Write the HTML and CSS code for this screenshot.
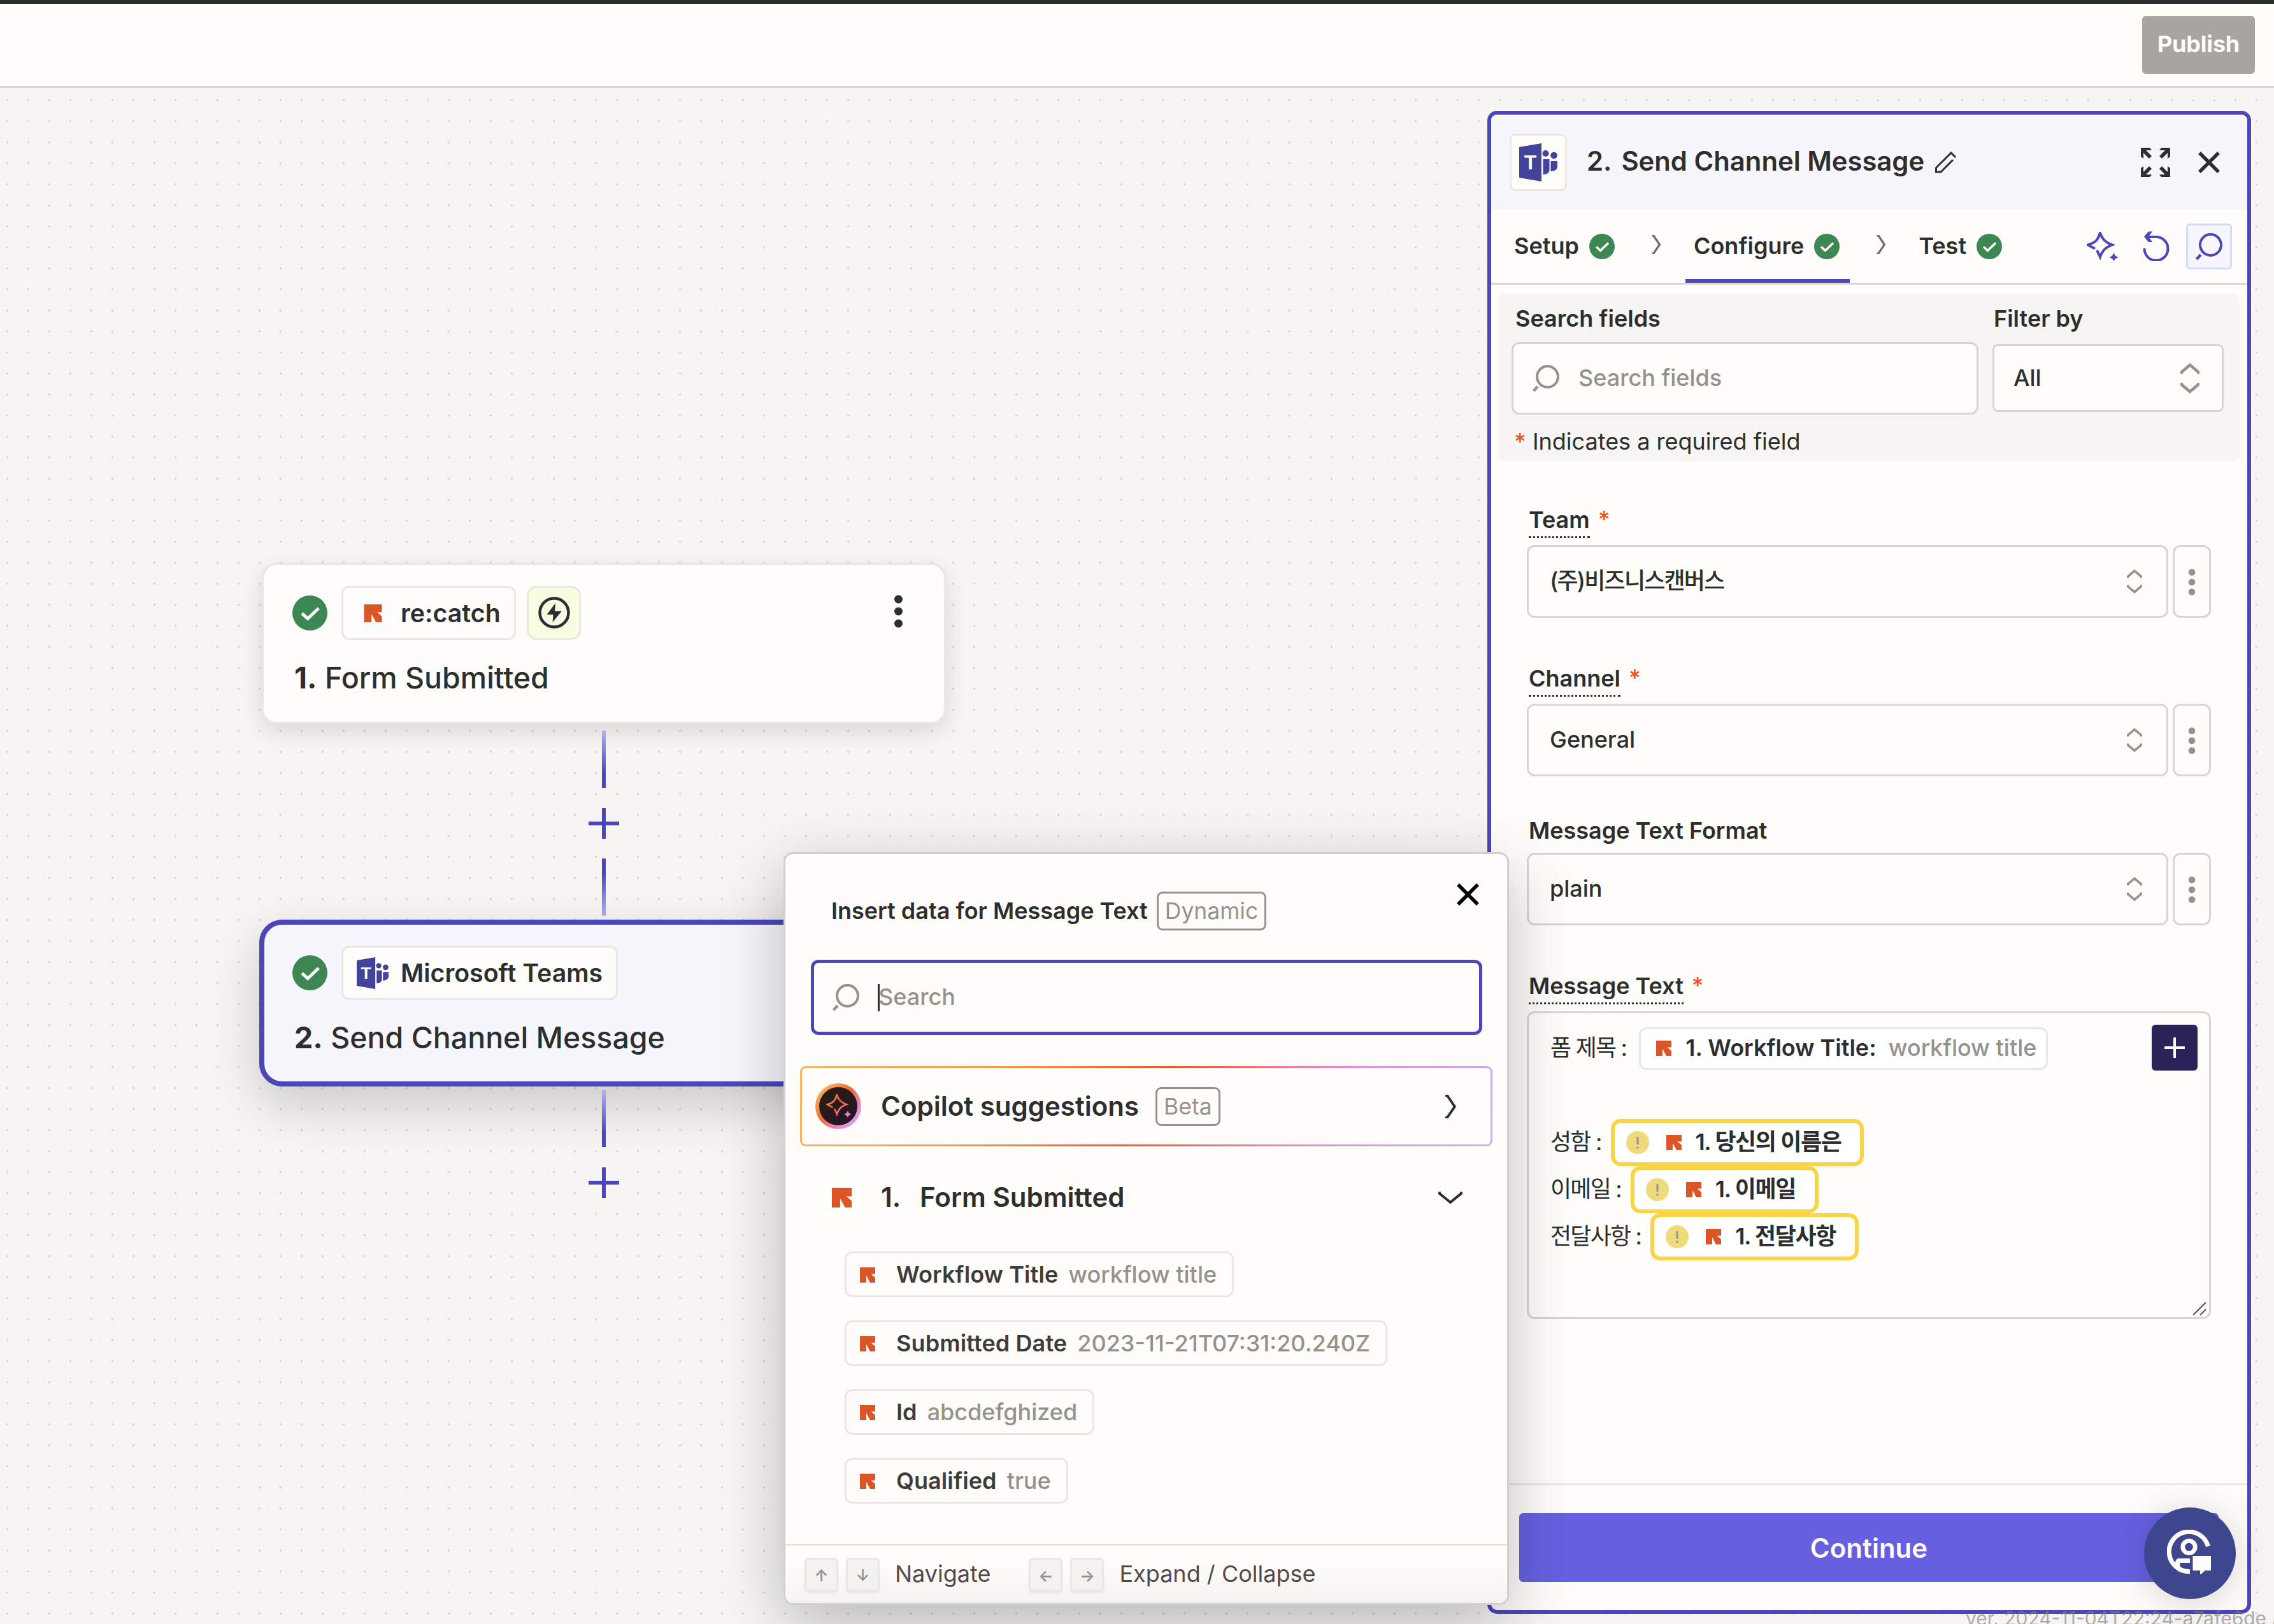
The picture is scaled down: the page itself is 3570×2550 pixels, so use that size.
FILE: index.html
```html
<!DOCTYPE html>
<html lang="en">
<head>
  <meta charset="UTF-8">
  <title>Zap editor - Send Channel Message</title>
  <meta name="viewport" content="width=device-width, initial-scale=1.0">
  <link rel="stylesheet" href="styles.css">
</head>
<body>
  <!-- Shared icons -->
  <svg class="sprite" aria-hidden="true">
    <symbol id="i-check" viewBox="0 0 40 40">
      <circle cx="20" cy="20" r="20" fill="#3d8755"/>
      <path d="M11 20.5L17.5 26.5L30 14.5" fill="none" stroke="#fffdf9" stroke-width="3.6"/>
    </symbol>
    <symbol id="i-recatch" viewBox="0 0 30 30">
      <path d="M0 0H30V13H22L30 20V30H20L12.5 16V30H0Z" fill="#dc5527"/>
    </symbol>
    <symbol id="i-teams" viewBox="0 0 60 60">
      <path d="M0 6L35 0V60L0 54Z" fill="#44439b"/>
      <text x="17.5" y="41" text-anchor="middle" class="teams-letter">T</text>
      <circle cx="41.5" cy="16" r="5" fill="#44439b"/>
      <circle cx="54.5" cy="19" r="5.3" fill="#44439b"/>
      <path d="M37.5 25H47.5V42Q47 49 37.5 49Z" fill="#44439b"/>
      <path d="M49.5 28H60V37Q59 44 49.5 44Z" fill="#44439b"/>
    </symbol>
    <symbol id="i-search" viewBox="0 0 42 43">
      <circle cx="23.5" cy="18.5" r="16.5" fill="none" stroke="currentColor" stroke-width="4"/>
      <path d="M8 34L1.5 41" fill="none" stroke="currentColor" stroke-width="4.5"/>
    </symbol>
    <symbol id="i-updown" viewBox="0 0 30 48">
      <path d="M1.5 17V14.5L15 3L28.5 14.5V17M1.5 31V33.5L15 45L28.5 33.5V31" fill="none" stroke="currentColor" stroke-width="4.5"/>
    </symbol>
    <symbol id="i-chevron" viewBox="0 0 16 30">
      <path d="M1.5 1L4 1L13.5 15L4 29H1.5" fill="none" stroke="currentColor" stroke-width="3.2"/>
    </symbol>
    <symbol id="i-close" viewBox="0 0 34 34">
      <path d="M2 2L32 32M32 2L2 32" fill="none" stroke="currentColor" stroke-width="5.5"/>
    </symbol>
    <symbol id="i-plus" viewBox="0 0 48 48">
      <path d="M24 0V48M0 24H48" fill="none" stroke="currentColor" stroke-width="6"/>
    </symbol>
    <symbol id="i-kebab" viewBox="0 0 12 44">
      <circle cx="6" cy="6.5" r="5.3" fill="currentColor"/>
      <circle cx="6" cy="22" r="5.3" fill="currentColor"/>
      <circle cx="6" cy="37.5" r="5.3" fill="currentColor"/>
    </symbol>
    <symbol id="i-sparkle" viewBox="0 0 50 48">
      <path d="M13 26.5L2 20.5Q13 17 16 12.5Q19 8 21 2Q23 8 27 12.5Q31 17 40 20.5Q31 24 27 28.5Q23 33 21 39.5Q18 33 16 29" fill="none" stroke="currentColor" stroke-width="4"/>
      <path d="M42.5 32Q43.5 38.5 50 40Q43.5 41.5 42.5 47Q41.5 41.5 35 40Q41.5 38.5 42.5 32Z" fill="currentColor"/>
    </symbol>
    <symbol id="i-warn" viewBox="0 0 36 36">
      <circle cx="18" cy="18" r="18" fill="#efdb7b"/>
      <path d="M18 9V21M18 24.5V27.5" stroke="#95928e" stroke-width="3"/>
    </symbol>
  </svg>

  <header class="topbar">
    <button class="publish">Publish</button>
  </header>

  <main class="canvas">
    <!-- Step 1 -->
    <section class="node node-trigger">
      <div class="node-head">
        <svg class="node-check"><use href="#i-check"/></svg>
        <div class="app-chip">
          <span class="app-logo"><svg><use href="#i-recatch"/></svg></span>
          <span>re:catch</span>
        </div>
        <div class="bolt-chip">
          <svg viewBox="0 0 50 50">
            <circle cx="25" cy="25" r="22.5" fill="none" stroke="#2d2e2e" stroke-width="4.5"/>
            <path d="M27 10L13.5 28H23.5L22.5 40L37 22.5H26Z" fill="#2d2e2e"/>
          </svg>
        </div>
        <svg class="node-menu"><use href="#i-kebab"/></svg>
      </div>
      <h2 class="node-title"><b>1.</b> Form Submitted</h2>
    </section>

    <div class="link link-1"></div>
    <div class="add add-1"><svg><use href="#i-plus"/></svg></div>
    <div class="link link-2 up"></div>

    <!-- Step 2 -->
    <section class="node node-action">
      <div class="node-head">
        <svg class="node-check"><use href="#i-check"/></svg>
        <div class="app-chip">
          <svg class="teams"><use href="#i-teams"/></svg>
          <span>Microsoft Teams</span>
        </div>
      </div>
      <h2 class="node-title"><b>2.</b> Send Channel Message</h2>
    </section>

    <div class="link link-3"></div>
    <div class="add add-2"><svg><use href="#i-plus"/></svg></div>
  </main>

  <!-- Step editor -->
  <aside class="panel">
    <div class="panel-head">
      <div class="panel-logo"><svg><use href="#i-teams"/></svg></div>
      <h1 class="panel-title"><span>2.</span><span>Send Channel Message</span></h1>
      <svg class="pencil" viewBox="0 0 34 34">
        <path d="M32 9L25 2L1.5 25.5V32H9L28 13" fill="none" stroke="#2d2e2e" stroke-width="3"/>
      </svg>
      <svg class="expand" viewBox="0 0 46 46">
        <g fill="#2d2e2e">
          <path d="M0 0H14L17 4H8L17 13L13 17L4 8V17L0 14Z"/>
          <path d="M46 0H32L29 4H38L29 13L33 17L42 8V17L46 14Z"/>
          <path d="M0 46H14L17 42H8L17 33L13 29L4 38V29L0 32Z"/>
          <path d="M46 46H32L29 42H38L29 33L33 29L42 38V29L46 32Z"/>
        </g>
      </svg>
      <svg class="close"><use href="#i-close"/></svg>
    </div>

    <nav class="tabs">
      <div class="tab">Setup <svg class="tab-check"><use href="#i-check"/></svg></div>
      <svg class="tab-sep"><use href="#i-chevron"/></svg>
      <div class="tab active">Configure <svg class="tab-check"><use href="#i-check"/></svg></div>
      <svg class="tab-sep"><use href="#i-chevron"/></svg>
      <div class="tab">Test <svg class="tab-check"><use href="#i-check"/></svg></div>
      <div class="tools">
        <svg class="tool-sparkle"><use href="#i-sparkle"/></svg>
        <svg class="tool-undo" viewBox="0 0 42 48">
          <path d="M5 10H21A18.5 18.5 0 1 1 2.5 28" fill="none" stroke="currentColor" stroke-width="4"/>
          <path d="M2 9.5L9 1.5H15L9 9.5L15 18H9Z" fill="currentColor"/>
        </svg>
        <div class="tool-search"><svg><use href="#i-search"/></svg></div>
      </div>
    </nav>

    <div class="filters">
      <div class="filter-row">
        <div class="filter-search">
          <label class="label">Search fields</label>
          <div class="input"><svg><use href="#i-search"/></svg><span>Search fields</span></div>
        </div>
        <div class="filter-by">
          <label class="label">Filter by</label>
          <div class="select">All<svg><use href="#i-updown"/></svg></div>
        </div>
      </div>
      <p class="hint"><span class="star">*</span> Indicates a required field</p>
    </div>

    <div class="fields">
      <div class="field">
        <div class="field-label"><span class="label dotted">Team</span><span class="star">*</span></div>
        <div class="combo">
          <div class="combo-box ko">(주)비즈니스캔버스<svg><use href="#i-updown"/></svg></div>
          <div class="combo-menu"><svg><use href="#i-kebab"/></svg></div>
        </div>
      </div>
      <div class="field field-channel">
        <div class="field-label"><span class="label dotted">Channel</span><span class="star">*</span></div>
        <div class="combo">
          <div class="combo-box">General<svg><use href="#i-updown"/></svg></div>
          <div class="combo-menu"><svg><use href="#i-kebab"/></svg></div>
        </div>
      </div>
      <div class="field field-format">
        <div class="field-label"><span class="label">Message Text Format</span></div>
        <div class="combo">
          <div class="combo-box">plain<svg><use href="#i-updown"/></svg></div>
          <div class="combo-menu"><svg><use href="#i-kebab"/></svg></div>
        </div>
      </div>
      <div class="field">
        <div class="field-label"><span class="label dotted">Message Text</span><span class="star">*</span></div>
        <div class="editor">
          <div class="line">
            <span class="line-text first ko">폼 제목 :</span>
            <span class="pill"><svg class="rc"><use href="#i-recatch"/></svg><b>1. Workflow Title:</b><i>workflow title</i></span>
          </div>
          <div class="line"></div>
          <div class="line">
            <span class="line-text ko">성함 :</span>
            <span class="pill warn"><svg class="wi"><use href="#i-warn"/></svg><svg class="rc"><use href="#i-recatch"/></svg><b>1. 당신의 이름은</b></span>
          </div>
          <div class="line">
            <span class="line-text ko">이메일 :</span>
            <span class="pill warn"><svg class="wi"><use href="#i-warn"/></svg><svg class="rc"><use href="#i-recatch"/></svg><b>1. 이메일</b></span>
          </div>
          <div class="line">
            <span class="line-text ko">전달사항 :</span>
            <span class="pill warn"><svg class="wi"><use href="#i-warn"/></svg><svg class="rc"><use href="#i-recatch"/></svg><b>1. 전달사항</b></span>
          </div>
          <button class="insert"><svg><use href="#i-plus"/></svg></button>
          <svg class="grip" viewBox="0 0 22 22"><path d="M1 21L21 1M12 21L21 12" stroke="#55524f" stroke-width="2"/></svg>
        </div>
      </div>
    </div>

    <div class="panel-foot">
      <button class="continue">Continue</button>
    </div>
  </aside>

  <!-- Insert data popup -->
  <div class="popup">
    <div class="popup-head">
      <span class="popup-title">Insert data for Message Text</span>
      <span class="badge">Dynamic</span>
      <svg class="popup-close"><use href="#i-close"/></svg>
    </div>
    <div class="popup-search"><svg><use href="#i-search"/></svg><span class="caret"></span><span>Search</span></div>
    <div class="copilot">
      <div class="orb">
        <svg viewBox="0 0 50 48">
          <defs>
            <linearGradient id="spark" x1="0" y1="0" x2="1" y2="1">
              <stop offset="0" stop-color="#f5b45f"/>
              <stop offset=".45" stop-color="#ef5a2a"/>
              <stop offset="1" stop-color="#ee82c4"/>
            </linearGradient>
          </defs>
          <path d="M13 26.5L2 20.5Q13 17 16 12.5Q19 8 21 2Q23 8 27 12.5Q31 17 40 20.5Q31 24 27 28.5Q23 33 21 39.5Q18 33 16 29" fill="none" stroke="url(#spark)" stroke-width="3.5"/>
          <path d="M42.5 32Q43.5 38.5 50 40Q43.5 41.5 42.5 47Q41.5 41.5 35 40Q41.5 38.5 42.5 32Z" fill="#ee7fc0"/>
        </svg>
      </div>
      <span class="copilot-text">Copilot suggestions</span>
      <span class="badge">Beta</span>
      <svg class="row-arrow"><use href="#i-chevron"/></svg>
    </div>
    <div class="group">
      <span class="group-logo"><svg><use href="#i-recatch"/></svg></span>
      <span class="group-num">1.</span>
      <span class="group-name">Form Submitted</span>
      <svg class="group-arrow" viewBox="0 0 38 22"><path d="M2 1.5V4L19 18L36 4V1.5" fill="none" stroke="#2d2e2e" stroke-width="4"/></svg>
    </div>
    <div class="tokens">
      <div class="token"><span><svg class="rc"><use href="#i-recatch"/></svg></span><b>Workflow Title</b><i>workflow title</i></div>
      <div class="token"><span><svg class="rc"><use href="#i-recatch"/></svg></span><b>Submitted Date</b><i>2023-11-21T07:31:20.240Z</i></div>
      <div class="token"><span><svg class="rc"><use href="#i-recatch"/></svg></span><b>Id</b><i>abcdefghized</i></div>
      <div class="token"><span><svg class="rc"><use href="#i-recatch"/></svg></span><b>Qualified</b><i>true</i></div>
    </div>
    <div class="popup-foot">
      <kbd>↑</kbd><kbd>↓</kbd><span class="nav">Navigate</span>
      <kbd>←</kbd><kbd>→</kbd><span>Expand / Collapse</span>
    </div>
  </div>

  <div class="version">ver. 2024-11-04T22:24-a7afe6de /</div>

  <div class="chat">
    <svg viewBox="0 0 70 70">
      <path d="M64.5 26A31.2 31.2 0 1 0 36 65.500" fill="none" stroke="#fffdf9" stroke-width="7.2"/>
      <circle cx="34.5" cy="27" r="9.7" fill="none" stroke="#fffdf9" stroke-width="6.8"/>
      <path d="M17 62V55Q15.5 48.5 19 48.5H36" fill="none" stroke="#fffdf9" stroke-width="7"/>
      <path d="M40.5 41H69V64H59.5L54 69.5H52V64H40.5Z" fill="#fffdf9"/>
    </svg>
  </div>
</body>
</html>
```
FILE: styles.css
```css
* {
  box-sizing: border-box;
}
body {
  margin: 0;
  width: 3570px;
  height: 2550px;
  position: relative;
  overflow: hidden;
  font-family: Inter, "Noto Sans CJK KR", sans-serif;
  font-size: 36px;
  line-height: 1.2;
  color: #2d2e2e;
  background-color: #f6f5f4;
}
svg {
  display: block;
  flex: none;
}
h1, h2, p {
  margin: 0;
}
i {
  font-style: normal;
}
button {
  font-family: inherit;
  border: none;
  padding: 0;
}
.sprite {
  display: none;
}
.teams-letter {
  font-family: "Liberation Sans", sans-serif;
  font-weight: 700;
  font-size: 32px;
  fill: #fffdf9;
}
.ko {
  letter-spacing: -1.8px;
}

/* Top bar */
.topbar {
  height: 138px;
  border-top: 6px solid #2d2e2e;
  border-bottom: 3px solid #d7d5d2;
  background: #fffdf9;
  display: flex;
  justify-content: flex-end;
  padding: 19px 30px 0 0;
}
.publish {
  width: 177px;
  height: 91px;
  padding-bottom: 3px;
  border-radius: 6px;
  background: #a8a5a0;
  color: #fffdf9;
  font-size: 36px;
  font-weight: 700;
  letter-spacing: -0.2px;
}

/* Canvas */
.canvas {
  height: 2412px;
  background-image: radial-gradient(circle at 11.5px 25.5px, #d9d7d5 1.3px, transparent 2.3px);
  background-size: 33px 33px;
  background-position: 0 -6px;
}
.node {
  position: absolute;
  background: #fffdf9;
}
.node-trigger {
  left: 411px;
  top: 884px;
  width: 1074px;
  height: 253px;
  padding: 33px 42px 0 45px;
  border: 3px solid #e8e7e4;
  border-radius: 24px;
  box-shadow: 0 12px 36px rgba(0, 0, 0, 0.12);
}
.node-action {
  left: 407px;
  top: 1444px;
  width: 1084px;
  height: 262px;
  padding: 33px 44px 0 44px;
  border: 8px solid #4c46b9;
  border-radius: 36px;
  background: #f7f6fd;
  box-shadow: 0 30px 80px rgba(0, 0, 0, 0.18);
}
.node-head {
  display: flex;
  align-items: center;
  height: 85px;
}
.node-check {
  width: 55px;
  height: 55px;
  margin-right: 22px;
}
.app-chip {
  height: 85px;
  display: flex;
  align-items: center;
  gap: 19px;
  padding: 0 21px;
  border: 3px solid #e8e7e4;
  border-radius: 12px;
  background: #fffdf9;
  font-size: 39.300px;
  font-weight: 600;
}
.app-logo {
  width: 50px;
  height: 50px;
  padding: 11px;
  background: #fff;
}
.app-logo svg {
  width: 29px;
  height: 28px;
}
.teams {
  width: 50px;
  height: 50px;
}
.bolt-chip {
  width: 85px;
  height: 85px;
  margin-left: 17px;
  padding: 14px 15px;
  border: 3px solid #e8e7e4;
  border-radius: 15px;
  background: #f7fde1;
}
.bolt-chip svg {
  width: 50px;
  height: 50px;
}
.node-menu {
  width: 15px;
  height: 54px;
  margin-left: auto;
  margin-right: 22px;
  margin-bottom: 6px;
}
.node-title {
  margin: 31px 0 0 3px;
  font-size: 46.500px;
  line-height: 56px;
  font-weight: 500;
}
.node-title b {
  font-weight: 700;
}
.link {
  position: absolute;
  left: 945px;
  width: 6px;
  height: 90px;
  background: linear-gradient(#b5b0ee, #4c46b9 75%);
}
.link.up {
  background: linear-gradient(to top, #b5b0ee, #4c46b9 75%);
}
.link-1 { top: 1147px; }
.link-2 { top: 1348px; }
.link-3 { top: 1711px; }
.add {
  position: absolute;
  left: 903px;
  width: 90px;
  height: 90px;
  padding: 21px;
  border-radius: 50%;
  background: #f6f5f4;
  color: #4c46b9;
}
.add svg {
  width: 48px;
  height: 48px;
}
.add-1 { top: 1248px; }
.add-2 { top: 1812px; }

/* Step editor */
.panel {
  position: absolute;
  left: 2335px;
  top: 174px;
  width: 1199px;
  height: 2360px;
  display: flex;
  flex-direction: column;
  border: 6px solid #4c46b9;
  border-radius: 15px;
  background: #fffdf9;
  overflow: hidden;
}
.panel-head {
  height: 150px;
  display: flex;
  align-items: center;
  padding: 0 43px 0 29px;
  background: #f7f6fd;
}
.panel-logo {
  width: 90px;
  height: 90px;
  padding: 12px;
  border: 3px solid #e8e7e4;
  border-radius: 9px;
  background: #fffdf9;
}
.panel-logo svg {
  width: 60px;
  height: 60px;
}
.panel-title {
  display: flex;
  gap: 15px;
  margin-left: 31px;
  padding-bottom: 4px;
  font-size: 41.800px;
  font-weight: 600;
}
.pencil {
  width: 34px;
  height: 34px;
  margin-left: 17px;
}
.expand {
  width: 46px;
  height: 46px;
  margin-left: auto;
}
.close {
  width: 34px;
  height: 34px;
  margin-left: 44px;
}
.tabs {
  height: 117px;
  display: flex;
  padding-left: 23px;
  border-bottom: 3px solid #d7d5d2;
}
.tab {
  display: flex;
  align-items: center;
  gap: 16px;
  height: 114px;
  padding: 5px 16px 0 13px;
  border-bottom: 6px solid transparent;
  font-weight: 600;
}
.tab.active {
  border-color: #4c46b9;
}
.tab-check {
  width: 40px;
  height: 40px;
}
.tab-sep {
  width: 16px;
  height: 30px;
  margin: 39px 38px 0 41px;
  color: #6b6a68;
}
.tools {
  display: flex;
  margin-left: auto;
  padding: 21px 24px 0 0;
  color: #4c46b9;
}
.tool-sparkle {
  width: 50px;
  height: 48px;
  margin: 13px 38px 0 0;
}
.tool-undo {
  width: 42px;
  height: 48px;
  margin: 11px 26px 0 0;
}
.tool-search {
  width: 72px;
  height: 72px;
  padding: 12px;
  border: 3px solid #d4d8fa;
  border-radius: 6px;
  background: #f7f6fd;
}
.tool-search svg {
  width: 42px;
  height: 43px;
}
.filters {
  height: 262px;
  margin: 15px 12px 0 11px;
  padding: 16px 25px 0 21px;
  border-radius: 9px;
  background: #f6f5f4;
}
.filter-row {
  display: flex;
  gap: 22px;
  height: 173px;
}
.label {
  display: block;
  font-size: 36px;
  line-height: 44px;
  font-weight: 600;
}
.filter-search .label {
  padding-left: 6px;
}
.filter-by .label {
  padding-left: 2px;
}
.filter-search {
  width: 733px;
}
.input {
  height: 114px;
  margin-top: 15px;
  display: flex;
  align-items: center;
  gap: 30px;
  padding-left: 30px;
  border: 3px solid #d7d5d2;
  border-radius: 12px;
  background: #fffdf9;
  color: #95928e;
  font-weight: 500;
}
.input svg {
  width: 42px;
  height: 43px;
}
.filter-by {
  width: 363px;
}
.select {
  height: 107px;
  margin-top: 18px;
  display: flex;
  align-items: center;
  justify-content: space-between;
  padding: 0 35px 0 30px;
  border: 3px solid #d7d5d2;
  border-radius: 9px;
  background: #fffdf9;
  font-weight: 500;
}
.select svg {
  width: 30px;
  height: 48px;
  color: #95928e;
}
.star {
  color: #f0521f;
  font-weight: 500;
}
.hint {
  padding-left: 4px;
  line-height: 44px;
  margin-top: 20px;
}
.fields {
  flex: 1;
  padding: 70px 57px 0 56px;
}
.field {
  margin-bottom: 73px;
}
.field-label {
  display: flex;
  gap: 13px;
  height: 62px;
  padding-left: 3px;
}
.field-channel {
  margin-bottom: 63px;
}
.field-format .field-label {
  height: 57px;
}
.dotted {
  height: 51px;
  border-bottom: 3px dotted #2d2e2e;
}
.combo {
  display: flex;
  gap: 7px;
}
.combo-box {
  width: 1007px;
  height: 114px;
  display: flex;
  align-items: center;
  justify-content: space-between;
  padding: 0 38px 0 33px;
  border: 3px solid #d7d5d2;
  border-radius: 12px;
  font-weight: 500;
}
.combo-box svg {
  width: 24px;
  height: 38px;
  color: #95928e;
}
.combo-menu {
  width: 60px;
  height: 114px;
  padding: 33px 21px;
  border: 3px solid #d7d5d2;
  border-radius: 12px;
  color: #95928e;
}
.combo-menu svg {
  width: 12px;
  height: 44px;
}
.editor {
  position: relative;
  height: 483px;
  padding: 18px 0 0 34px;
  border: 3px solid #d7d5d2;
  border-radius: 12px;
}
.line {
  display: flex;
  align-items: center;
  height: 74px;
}
.line-text {
  margin-right: 15px;
}
.line-text.first {
  margin-right: 20px;
}
.pill {
  height: 67px;
  display: flex;
  align-items: center;
  padding: 0 15px 0 24px;
  border: 3px solid #e8e7e4;
  border-radius: 12px;
  background: #fff;
}
.pill.warn {
  height: 74px;
  padding: 0 30px 0 18px;
  border: 6px solid #fbd443;
  border-radius: 15px;
  letter-spacing: -1.4px;
}
.rc {
  width: 24px;
  height: 24px;
}
.wi {
  width: 36px;
  height: 36px;
  margin-right: 27px;
}
.pill b {
  margin-left: 22px;
  font-weight: 600;
}
.pill i {
  margin-left: 19px;
  color: #95928e;
  font-weight: 500;
}
.insert {
  position: absolute;
  right: 18px;
  top: 18px;
  width: 72px;
  height: 72px;
  padding: 20px;
  border-radius: 6px;
  background: #2b2358;
  color: #fffdf9;
}
.insert svg {
  width: 32px;
  height: 32px;
}
.grip {
  position: absolute;
  right: 4px;
  bottom: 2px;
  width: 22px;
  height: 22px;
}
.panel-foot {
  height: 199px;
  padding: 44px 45px 0 44px;
  border-top: 3px solid #e8e7e4;
}
.continue {
  width: 1098px;
  height: 108px;
  display: block;
  border-radius: 6px;
  background: #6660e0;
  color: #fffdf9;
  font-size: 42px;
  font-weight: 600;
}

/* Popup */
.popup {
  position: absolute;
  left: 1230px;
  top: 1338px;
  width: 1139px;
  height: 1182px;
  border: 3px solid #d2d0cd;
  border-radius: 15px;
  background: #fffdf9;
  box-shadow: 0 30px 100px rgba(0, 0, 0, 0.25);
}
.popup-head {
  display: flex;
  align-items: center;
  height: 61px;
  margin: 59px 44px 0 72px;
}
.popup-title {
  font-weight: 600;
}
.badge {
  height: 61px;
  margin-left: 14px;
  padding: 0 10px;
  border: 3px solid #95928e;
  border-radius: 9px;
  color: #95928e;
  font-size: 35.500px;
  line-height: 55px;
}
.popup-close {
  width: 35px;
  height: 35px;
  margin: -52px 0 0 auto;
  color: #000;
}
.popup-search {
  height: 118px;
  margin: 46px 39px 0 40px;
  display: flex;
  align-items: center;
  padding-left: 29px;
  border: 5px solid #4c46b9;
  border-radius: 12px;
  color: #95928e;
  font-weight: 500;
}
.popup-search svg {
  width: 42px;
  height: 43px;
}
.caret {
  width: 3px;
  height: 43px;
  margin: 0 -2px 0 29px;
  background: #2d2e2e;
}
.copilot {
  height: 126px;
  margin: 49px 23px 0 23px;
  display: flex;
  align-items: center;
  padding: 0 53px 0 21px;
  border: 3px solid transparent;
  border-radius: 9px;
  background: linear-gradient(#fffdf9, #fffdf9) padding-box,
    linear-gradient(120deg, #f7b867 0%, #f4a04c 25%, #ee5a29 50%, #e98fd6 75%, #bfb4f8 100%) border-box;
}
.orb {
  width: 72px;
  height: 72px;
  padding: 11px 5px 0 11px;
  border: 6px solid transparent;
  border-radius: 50%;
  background: linear-gradient(160deg, #2d1c12, #221528) padding-box,
    linear-gradient(135deg, #f7b867 10%, #ef6a2f 45%, #e98fd6 75%, #bfb4f8 100%) border-box;
}
.orb svg {
  width: 40px;
  height: 38px;
}
.copilot-text {
  margin-left: 31px;
  font-size: 42px;
  font-weight: 600;
}
.copilot .badge {
  margin-left: 26px;
}
.row-arrow {
  width: 20px;
  height: 37px;
  margin-left: auto;
}
.group {
  display: flex;
  align-items: center;
  height: 61px;
  margin: 50px 70px 0 58px;
  font-size: 42px;
  font-weight: 600;
}
.group-logo {
  width: 61px;
  height: 61px;
  padding: 15px;
  background: #fff;
}
.group-logo svg {
  width: 31px;
  height: 31px;
}
.group-num {
  width: 61px;
  margin-left: 31px;
}
.group-arrow {
  width: 38px;
  height: 22px;
  margin-left: auto;
}
.tokens {
  display: flex;
  flex-direction: column;
  align-items: flex-start;
  gap: 36px;
  height: 459px;
  margin: 54px 0 0 93px;
}
.token {
  height: 72px;
  display: flex;
  align-items: center;
  padding: 2px 24px 0 12px;
  border: 3px solid #e8e7e4;
  border-radius: 12px;
}
.token span {
  padding: 9px;
  background: #fff;
}
.token b {
  margin-left: 24px;
  color: #3d3c3a;
  font-weight: 600;
  letter-spacing: 0.1px;
}
.token i {
  margin-left: 16px;
  color: #95928e;
  font-weight: 500;
}
.popup-foot {
  height: 93px;
  display: flex;
  align-items: center;
  padding: 0 0 0 30px;
  border-top: 3px solid #e8e6dc;
  border-radius: 0 0 12px 12px;
  background: linear-gradient(#fffdf9 30%, #f4f3f1);
  color: #54494a;
}
kbd {
  width: 53px;
  height: 53px;
  margin-right: 12px;
  border: 3px solid #e8e7e4;
  border-radius: 6px;
  background: #f3f2f1;
  box-shadow: 0 3px 3px rgba(0, 0, 0, 0.06);
  color: #95928e;
  font-family: Inter, sans-serif;
  font-size: 25px;
  font-weight: 600;
  line-height: 50px;
  text-align: center;
}
.popup-foot span {
  margin-left: 12px;
}
.popup-foot .nav {
  margin-right: 60px;
}

/* Corner items */
.version {
  position: absolute;
  left: 3086px;
  top: 2522px;
  height: 28px;
  overflow: hidden;
  color: rgba(130, 128, 125, 0.65);
  font-size: 30px;
  line-height: 38px;
  white-space: nowrap;
}
.chat {
  position: absolute;
  left: 3366px;
  top: 2367px;
  width: 144px;
  height: 144px;
  padding: 35px 0 0 36px;
  border-radius: 50%;
  background: #3e478e;
  box-shadow: 0 6px 60px rgba(0, 0, 0, 0.16);
}
.chat svg {
  width: 70px;
  height: 70px;
}
```
